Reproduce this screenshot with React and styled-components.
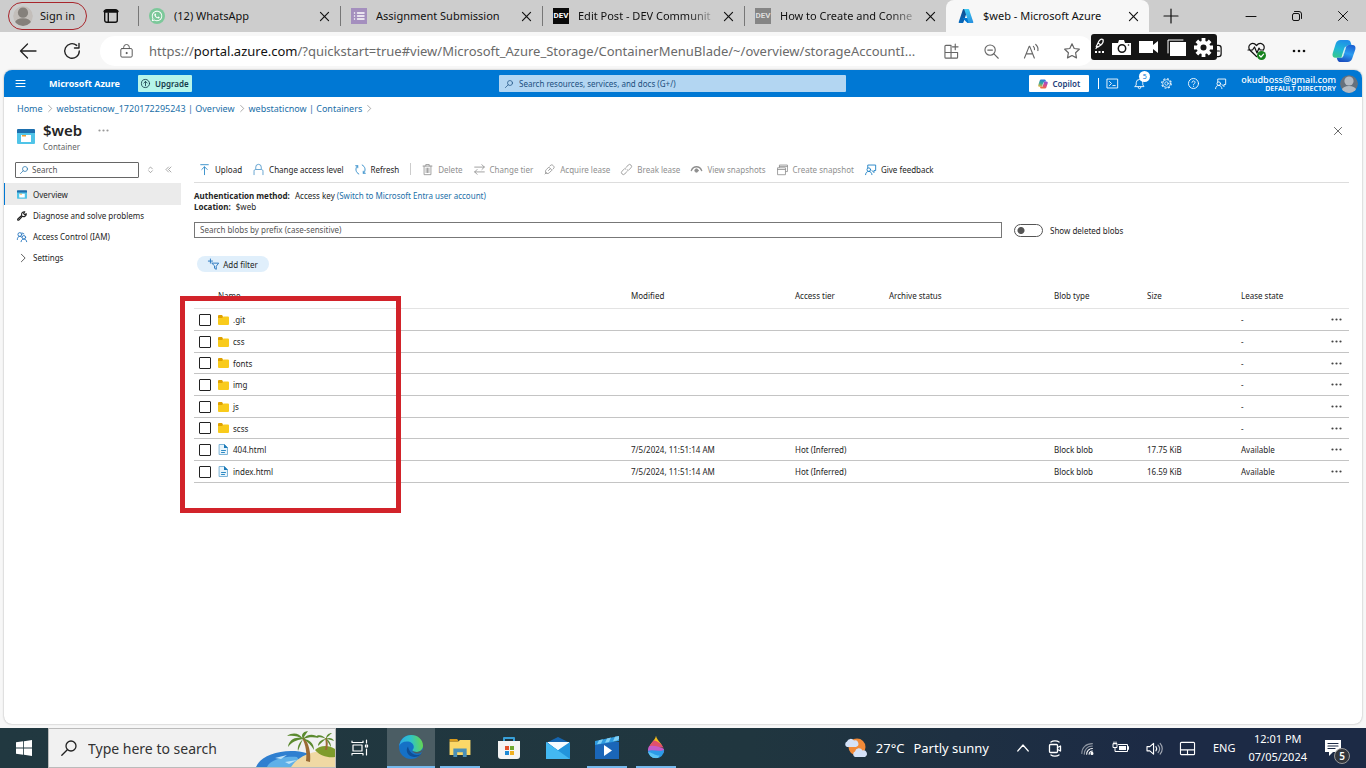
import React, { useState } from 'react';
import styled, { createGlobalStyle, css } from 'styled-components';
import { FaWhatsapp } from 'react-icons/fa';

const GlobalStyle = createGlobalStyle`
    * { box-sizing: border-box; }
    html, body { margin: 0; padding: 0; }
    body {
        background: #f7f7f7;
        color: #242424;
        font-family: "Noto Sans", "Open Sans", sans-serif;
        font-size: 8px;
        line-height: 11px;
    }
    button, input {
        font: inherit;
        color: inherit;
        margin: 0;
    }
    button {
        background: none;
        border: 0;
        padding: 0;
    }
    a { text-decoration: none; color: inherit; }
`

const Desktop = styled.div`
    display: flex;
    flex-direction: column;
    min-height: 100vh;
    position: relative;
`

/* drawn icons */

const Svg = styled.svg`
    display: block;
    flex: none;
    fill: none;
    stroke: ${p => p.$color || 'currentColor'};
    stroke-width: ${p => p.$weight || 1};
    stroke-linecap: round;
    stroke-linejoin: round;
    overflow: visible;
`
const Icon = ({ size = 16, w, h, box = 16, color, weight, children }) => (
    <Svg width={w || size} height={h || size} viewBox={`0 0 ${box} ${box}`} $color={color} $weight={weight} aria-hidden="true">
        {children}
    </Svg>
);

const CloseIcon = ({ size = 10, weight = 1 }) => <Icon size={size} box={10} weight={weight}><path d="M.5 .5l9 9M9.5 .5l-9 9" /></Icon>;
const PersonIcon = ({ size, back = '#c3beba', front = '#85807b' }) => (
    <Icon size={size} box={18}>
        <clipPath id={`head${size}`}><circle cx="9" cy="9" r="9" /></clipPath>
        <g stroke="none" clipPath={`url(#head${size})`}>
            <circle cx="9" cy="9" r="9" fill={back} />
            <circle cx="9" cy="6" r="4.6" fill={front} />
            <ellipse cx="9" cy="15" rx="7.2" ry="4" fill={front} />
        </g>
    </Icon>
);
const AzureLogo = () => (
    <Icon size={16} box={96}>
        <defs>
            <linearGradient id="azA" x1="0.7" y1="0" x2="0.3" y2="1"><stop offset="0" stopColor="#114a8b" /><stop offset="1" stopColor="#0669bc" /></linearGradient>
            <linearGradient id="azB" x1="0.3" y1="0" x2="0.7" y2="1"><stop offset="0" stopColor="#3ccbf4" /><stop offset="1" stopColor="#2892df" /></linearGradient>
        </defs>
        <g stroke="none">
            <path fill="url(#azA)" d="M33.338 6.544h26.038l-27.03 80.087a4.152 4.152 0 0 1-3.933 2.824H8.149a4.145 4.145 0 0 1-3.928-5.47L29.404 9.368a4.152 4.152 0 0 1 3.934-2.825z" />
            <path fill="#0078d4" d="M71.175 60.261h-41.29a1.911 1.911 0 0 0-1.305 3.309l26.532 24.764a4.171 4.171 0 0 0 2.846 1.121h23.38z" />
            <path fill="url(#azB)" d="M66.595 9.364a4.145 4.145 0 0 0-3.928-2.82H33.648a4.146 4.146 0 0 1 3.928 2.82l25.184 74.62a4.146 4.146 0 0 1-3.928 5.472h29.02a4.146 4.146 0 0 0 3.927-5.472z" />
        </g>
    </Icon>
);
const CopilotLogo = ({ size, bright, id }) => (
    <Icon size={size} box={24}>
        <defs>
            <linearGradient id={`${id}a`} x1="0.5" y1="0" x2="0.2" y2="1">
                {bright
                    ? <><stop offset="0" stopColor="#1f8fe8" /><stop offset="0.5" stopColor="#1fb6d8" /><stop offset="1" stopColor="#37c98b" /></>
                    : <><stop offset="0" stopColor="#2c7be0" /><stop offset="0.5" stopColor="#35a99a" /><stop offset="1" stopColor="#e8b43a" /></>}
            </linearGradient>
            <linearGradient id={`${id}b`} x1="0.7" y1="0" x2="0.4" y2="1">
                {bright
                    ? <><stop offset="0" stopColor="#1c62d4" /><stop offset="0.5" stopColor="#2b9df0" /><stop offset="1" stopColor="#1a4fc0" /></>
                    : <><stop offset="0" stopColor="#8a50d8" /><stop offset="0.5" stopColor="#d84c8c" /><stop offset="1" stopColor="#f0703a" /></>}
            </linearGradient>
        </defs>
        <g stroke="none">
            <path fill={`url(#${id}a)`} d="M8.500 1h7c1.600 0 2.600 .8 3.100 2.300l.9 2.700h-2.600c-1.500 0-2.300 .8-2.800 2.300l-2.500 8.200c-.5 1.500-1.300 2.300-2.900 2.300H3.600C1 18.800 0 16.800 .7 14.200L3.800 4.500C4.600 2.200 6.200 1 8.500 1z" />
            <path fill={`url(#${id}b)`} d="M15.500 23h-7c-1.600 0-2.600-.8-3.100-2.300l-.7-1.900h3.900c1.600 0 2.400-.8 2.900-2.300l2.500-8.200C14.500 6.800 15.300 6 16.800 6h3.600c2.600 0 3.600 2 2.900 4.400l-3.100 9.100C19.400 21.800 17.800 23 15.500 23z" />
            <path fill="#fff" fillOpacity=".8" d="M14.200 7.500l-3 9.500c-.3 .9-.8 1.500-1.800 1.800l.8-3.200 2-6c.3-1.200 .8-1.800 2-2.100z" />
        </g>
    </Icon>
);
const ContainerIcon = ({ w, h }) => (
    <Svg width={w} height={h} viewBox="0 0 18 15" aria-hidden="true">
        <g stroke="none">
            <path fill="#50c4e8" d="M0 3h18v11a1 1 0 0 1-1 1H1a1 1 0 0 1-1-1z" />
            <path fill="#1c6fae" d="M1 0h16a1 1 0 0 1 1 1v3H0V1a1 1 0 0 1 1-1z" />
            <path fill="#fff" d="M4 6h10v7H4z" />
            <path fill="#f0a030" d="M5 6h4v1.500H5z" />
        </g>
    </Svg>
);
const SearchIcon = ({ size = 9, color, weight = 1.4 }) => (
    <Icon size={size} color={color} weight={weight}><circle cx="10" cy="6" r="5" /><path d="M6.300 9.700L.8 15.200" /></Icon>
);
const ChevronRight = () => <Icon w={8} h={7} color="#888" weight={1.600}><path d="M5 1l7 7-7 7" /></Icon>;
const FeedbackIcon = ({ color }) => (
    <Icon size={11} color={color} weight={1.300}>
        <path d="M4 6V1.500h11.500v8H13v3l-2.800-3" /><circle cx="5.500" cy="8.200" r="2.600" /><path d="M.8 15.500c.3-3 2-4.700 4.700-4.700s4.200 1.700 4.600 4.700" />
    </Icon>
);
const Dots = () => <Svg width="11" height="3" viewBox="0 0 11 3"><g fill="currentColor" stroke="none"><circle cx="1.500" cy="1.500" r="1.100" /><circle cx="5.500" cy="1.500" r="1.100" /><circle cx="9.500" cy="1.500" r="1.100" /></g></Svg>;

/* browser tabs */

const TabStrip = styled.header`
    display: flex;
    align-items: center;
    height: 32px;
    background: #cdcdcd;
    color: #111;
    font-size: 11px;
    line-height: 16px;
    padding-left: 8px;
`
const SignIn = styled.button`
    display: flex;
    align-items: center;
    gap: 7px;
    width: 79px;
    height: 28px;
    padding-left: 4px;
    border: 1px solid #a8262c;
    border-radius: 14px;
    white-space: nowrap;
`
const WorkspaceButton = styled.button`
    margin: 0 20px 0 17px;
`
const Tab = styled.div`
    display: flex;
    align-items: center;
    flex: 0 1 202px;
    min-width: 0;
    height: ${p => p.$active ? '32px' : '20px'};
    padding: 0 11px 0 10px;
    gap: 9px;
    border-left: ${p => p.$active ? '0' : '1px solid #777'};
    ${p => p.$active && css`
        background: #f7f7f7;
        border-radius: 8px 8px 0 0;
        padding-left: 12px;
        flex-basis: 203px;
    `}
`
const TabTitle = styled.span`
    flex: 1;
    min-width: 0;
    overflow: hidden;
    white-space: nowrap;
    ${p => p.$fade && css`
        mask-image: linear-gradient(to right, #000 80%, rgba(0, 0, 0, .15));
    `}
`
const Favicon = styled.span`
    display: flex;
    align-items: center;
    justify-content: center;
    flex: none;
    width: 16px;
    height: 16px;
    background: ${p => p.$bg || 'none'};
    border-radius: ${p => p.$round ? '8px' : '0'};
    color: ${p => p.$color || '#fff'};
    font: bold 8px/16px "Roboto", sans-serif;
`
const CaptionButtons = styled.div`
    display: flex;
    align-items: center;
    margin-left: auto;
    padding-right: 18px;
    gap: 36px;
`
const NewTab = styled.button`
    margin-left: 15px;
`

const tabs = [
    { title: '(12) WhatsApp', icon: <Favicon $bg="#7cc89a" $round><FaWhatsapp size={12} /></Favicon> },
    {
        title: 'Assignment Submission',
        icon: <Favicon $bg="#a48fbe"><Icon size={12} box={12} weight={1.500}><path d="M1.500 3h.01M1.500 6h.01M1.500 9h.01M4.500 3H11M4.500 6H11M4.500 9H11" /></Icon></Favicon>,
    },
    { title: 'Edit Post - DEV Communit', fade: true, icon: <Favicon $bg="#0a0a0a">DEV</Favicon> },
    { title: 'How to Create and Conne', fade: true, icon: <Favicon $bg="#858585" $color="#ddd">DEV</Favicon> },
    { title: '$web - Microsoft Azure', active: true, icon: <AzureLogo /> },
];

const BrowserTabs = () => (
    <TabStrip>
        <SignIn><PersonIcon size={20} />Sign in</SignIn>
        <WorkspaceButton aria-label="Tab actions">
            <Icon size={14} box={14} weight={1.400}><rect x=".7" y=".7" width="12.600" height="12.600" rx="2" /><path d="M1 2.200h12" strokeWidth="3" /><path d="M4.300 4v9" /></Icon>
        </WorkspaceButton>
        {tabs.map(t => (
            <Tab key={t.title} $active={t.active}>
                {t.icon}
                <TabTitle $fade={t.fade}>{t.title}</TabTitle>
                <button aria-label="Close tab"><CloseIcon size={9} weight={1.300} /></button>
            </Tab>
        ))}
        <NewTab aria-label="New tab"><Icon size={14} box={14} weight={1.200}><path d="M7 0v14M0 7h14" /></Icon></NewTab>
        <CaptionButtons>
            <button aria-label="Minimize"><Icon size={10} box={10}><path d="M0 5.500h10" /></Icon></button>
            <button aria-label="Restore"><Icon size={10} box={10}><rect x=".5" y="2.500" width="7" height="7" rx="1.500" /><path d="M2.500 .5H7a2.500 2.500 0 0 1 2.500 2.500v4.500" /></Icon></button>
            <button aria-label="Close"><CloseIcon size={10} /></button>
        </CaptionButtons>
    </TabStrip>
);

/* address bar */

const Toolbar = styled.div`
    display: flex;
    align-items: center;
    height: 38px;
    padding: 0 10px 0 20px;
    gap: 28px;
`
const AddressBox = styled.div`
    display: flex;
    align-items: center;
    flex: 1;
    min-width: 0;
    height: 30px;
    margin-left: -8px;
    padding: 0 14px 0 20px;
    border-radius: 15px;
    background: #fff;
    color: #6a6a6a;
    font-size: 13px;
    line-height: 20px;
`
const Url = styled.span`
    flex: 1;
    min-width: 0;
    margin: 0 16px;
    overflow: hidden;
    white-space: nowrap;
    text-overflow: ellipsis;
    b {
        color: #111;
        font-weight: 400;
    }
`
const AddressIcons = styled.span`
    display: flex;
    align-items: center;
    gap: 25px;
    color: #666;
`
const ToolbarIcons = styled.div`
    display: flex;
    align-items: center;
    gap: 26px;
    margin-left: 86px;
    color: #111;
`
const Recorder = styled.div`
    position: absolute;
    top: 34px;
    right: 149px;
    display: flex;
    align-items: center;
    gap: 8px;
    width: 126px;
    height: 26px;
    padding: 0 6px 0 4px;
    border-radius: 3px;
    background: #151515;
    color: #fff;
`

const AddressBar = () => (
    <Toolbar>
        <button aria-label="Back"><Icon size={16} weight={1.300}><path d="M16 8H.5M7.500 1L.5 8l7 7" /></Icon></button>
        <button aria-label="Refresh"><Icon size={16} weight={1.400}><path d="M15.300 8A7.300 7.300 0 1 1 12.700 2.400M15 .5v4.500h-4.500" /></Icon></button>
        <AddressBox>
            <Icon w={13} h={16} weight={1.200} color="#555"><rect x="1" y="5" width="14" height="10.500" rx="1.500" /><path d="M4.500 5V3.500a3.500 3.500 0 0 1 7 0V5" /><circle cx="8" cy="10.500" r=".7" fill="#555" /></Icon>
            <Url>https://<b>portal.azure.com</b>/?quickstart=true#view/Microsoft_Azure_Storage/ContainerMenuBlade/~/overview/storageAccountI...</Url>
            <AddressIcons>
                <Icon size={15} weight={1.200}><path d="M7 1.500H2a1 1 0 0 0-1 1V14a1 1 0 0 0 1 1h11.500a1 1 0 0 0 1-1V9H1M7.500 1.500V15M12 0v6M9 3h6" /></Icon>
                <Icon size={15} weight={1.200}><circle cx="6.500" cy="6.500" r="5.500" /><path d="M10.600 10.600l4.600 4.600M4 6.500h5" /></Icon>
                <Icon size={15} weight={1.200}><path d="M.5 15L5.500 2.500h.6L11 15M2.300 10.500h7M10 2.500c1 .9 1.400 2.200 1.200 3.500M12.500 .5c2 1.700 2.700 4.200 2.300 6.500" /></Icon>
                <Icon size={16} weight={1.200}><path d="M8 .8l2.200 4.700 5.100.7-3.700 3.600.9 5.100L8 12.500l-4.500 2.400.9-5.100L.7 6.200l5.100-.7z" /></Icon>
            </AddressIcons>
        </AddressBox>
        <ToolbarIcons>
            <Icon size={14} weight={1.400}><rect x="1" y="1.500" width="14" height="13" rx="3" /><path d="M8 1.500v13M10 8h3" /></Icon>
            <Icon size={18} box={18} weight={1.200}>
                <path d="M8.500 14.500L2 8.300C.2 6.300 .5 3.500 2.400 2.200 4.500 .9 6.800 1.500 8.500 3.500c1.700-2 4-2.600 6.100-1.300C16.500 3.500 16.800 6 15.200 8.200M0 8h4.500L6.500 5 9 11l2-5 1.200 2H15" />
                <circle cx="13.500" cy="13.500" r="4.500" fill="#16821d" stroke="none" /><path d="M11.500 13.500l1.500 1.500 2.600-2.800" stroke="#fff" />
            </Icon>
            <Icon size={14} box={14}><g fill="#111" stroke="none"><circle cx="2" cy="7" r="1.300" /><circle cx="7" cy="7" r="1.300" /><circle cx="12" cy="7" r="1.300" /></g></Icon>
            <CopilotLogo size={24} bright id="edgeCopilot" />
        </ToolbarIcons>
    </Toolbar>
);

const RecorderBar = () => (
    <Recorder>
        <Svg width="9" height="16" viewBox="0 0 9 16">
            <path stroke="#fff" strokeWidth="1.200" d="M2 6l2-4c1-1.500 3-2 4-1.500C8.500 2 8 4 6.500 5.500L3 8c-1.500 .8-2.500 0-1-2zM3 4l3 2M1 9.500l1.500-2" />
            <path stroke="none" fill="#fff" d="M0 12h2v2H0zM3.500 12h2v2h-2zM7 12h2v2H7z" />
        </Svg>
        <Svg width="19" height="15" viewBox="0 0 19 15"><path stroke="none" fill="#fff" d="M0 3h6l1-3h5l1 3h6v12H0z" /><circle cx="10" cy="8.500" r="3.700" stroke="#151515" strokeWidth="1.500" /><circle cx="16.500" cy="5" r=".8" fill="#151515" stroke="none" /></Svg>
        <Svg width="20" height="14" viewBox="0 0 20 14"><path stroke="none" fill="#fff" d="M0 1h14v4l5-4v12l-5-4v4H0z" /></Svg>
        <Svg width="19" height="17" viewBox="0 0 19 17"><path stroke="#fff" d="M1 14V1h15" /><path stroke="none" fill="#fff" d="M3 3h16v14H3z" /></Svg>
        <Svg width="19" height="19" viewBox="0 0 20 20">
            <circle cx="10" cy="10" r="5.200" stroke="#fff" strokeWidth="4" />
            <path stroke="#fff" strokeWidth="4" strokeLinecap="butt" d="M10 0v4M10 16v4M0 10h4M16 10h4M3 3l2.500 2.500M14.500 14.500L17 17M17 3l-2.500 2.500M5.500 14.500L3 17" />
        </Svg>
    </Recorder>
);

/* portal */

const Page = styled.div`
    display: flex;
    flex-direction: column;
    flex: 1;
    margin: 0 4px 4px;
    border-radius: 8px;
    overflow: hidden;
    background: #fff;
    box-shadow: 0 0 2px rgba(0, 0, 0, .35);
`
const PortalHeader = styled.header`
    display: grid;
    grid-template-columns: 495fr 347fr 516fr;
    align-items: center;
    height: 27px;
    background: #0078d4;
    color: #fff;
`
const HeaderGroup = styled.div`
    display: flex;
    align-items: center;
    justify-content: ${p => p.$end ? 'flex-end' : 'flex-start'};
    padding: ${p => p.$end ? '0 4px 0 0' : '0 0 0 12px'};
`
const Brand = styled.a`
    margin: 0 18px 0 24px;
    font-size: 9px;
    font-weight: 700;
`
const Upgrade = styled.button`
    display: flex;
    align-items: center;
    gap: 5px;
    width: 54px;
    height: 17px;
    padding: 0 3px;
    border-radius: 1px;
    background: #b6f5ea;
    color: #143a4a;
    font-weight: 600;
`
const GlobalSearch = styled.label`
    display: flex;
    align-items: center;
    gap: 6px;
    height: 17px;
    padding: 0 6px;
    border-radius: 1px;
    background: #b3d6f2;
    color: #1b4f80;
`
const BareInput = styled.input`
    flex: 1;
    min-width: 0;
    height: 11px;
    padding: 0;
    border: 0;
    outline: 0;
    background: none;
    &::placeholder {
        color: ${p => p.$hint || '#555'};
        opacity: 1;
    }
`
const CopilotButton = styled.button`
    display: flex;
    align-items: center;
    justify-content: center;
    gap: 4px;
    width: 60px;
    height: 17px;
    margin-right: 9px;
    border-radius: 1px;
    background: #fff;
    color: #23417a;
    font-weight: 600;
`
const HeaderIcons = styled.div`
    display: flex;
    align-items: center;
    gap: 16px;
    padding-left: 8px;
    border-left: 1px solid #fff;
    button { position: relative; }
`
const Badge = styled.span`
    position: absolute;
    top: -7px;
    right: -5px;
    width: 11px;
    height: 11px;
    border-radius: 8px;
    background: #fff;
    color: #0078d4;
    font-size: 7px;
    line-height: 11px;
    text-align: center;
`
const Account = styled.div`
    display: flex;
    flex-direction: column;
    margin: 0 4px 0 15px;
    text-align: right;
    font-size: 9px;
    line-height: 10px;
    font-weight: 500;
    small {
        font-size: 7px;
        line-height: 8px;
        font-weight: 600;
    }
`

const TopBar = () => (
    <PortalHeader>
        <HeaderGroup>
            <button aria-label="Show portal menu"><Icon size={9} box={9}><path d="M0 1.500h9M0 4.500h9M0 7.500h9" /></Icon></button>
            <Brand href="#home">Microsoft Azure</Brand>
            <Upgrade><Icon size={9} weight={1.500}><circle cx="8" cy="8" r="7.200" /><path d="M8 12V4.500M5 7.200l3-3 3 3" /></Icon>Upgrade</Upgrade>
        </HeaderGroup>
        <GlobalSearch>
            <SearchIcon color="#1b4f80" size={8} />
            <BareInput $hint="#1b4f80" placeholder="Search resources, services, and docs (G+/)" aria-label="Search resources" />
        </GlobalSearch>
        <HeaderGroup $end>
            <CopilotButton><CopilotLogo size={10} id="portalCopilot" />Copilot</CopilotButton>
            <HeaderIcons>
                <button aria-label="Cloud Shell"><Icon size={11} weight={1.300}><rect x=".5" y="1.500" width="15" height="13" /><path d="M3.500 5l3 3-3 3M8.500 11H12" /></Icon></button>
                <button aria-label="Notifications"><Icon size={11} weight={1.300}><path d="M1.500 12.500h13l-1.700-2.500V7A4.800 4.800 0 0 0 3.200 7v3zM6 13.500a2 2 0 0 0 4 0" /></Icon><Badge>5</Badge></button>
                <button aria-label="Settings">
                    <Icon size={11} weight={1.100}><circle cx="8" cy="8" r="2.500" /><circle cx="8" cy="8" r="5.600" /><circle cx="8" cy="8" r="7" strokeDasharray="2.750 2.750" strokeLinecap="butt" strokeWidth="1.500" /></Icon>
                </button>
                <button aria-label="Help"><Icon size={11} weight={1.300}><circle cx="8" cy="8" r="7.300" /><path d="M5.800 6.300a2.200 2.200 0 1 1 3.300 2c-.8 .5-1.100 .9-1.100 1.700M8 12.200v.1" /></Icon></button>
                <button aria-label="Feedback"><FeedbackIcon /></button>
            </HeaderIcons>
            <Account>okudboss@gmail.com<small>DEFAULT DIRECTORY</small></Account>
            <PersonIcon size={18} back="#66707c" front="#b4bac2" />
        </HeaderGroup>
    </PortalHeader>
);

const Breadcrumb = styled.nav`
    display: flex;
    align-items: center;
    gap: 3px;
    height: 23px;
    padding-left: 13px;
    color: #1b6fa8;
    font-size: 9px;
`
const TitleBar = styled.div`
    display: flex;
    align-items: flex-start;
    gap: 8px;
    height: 40px;
    padding: 0 20px 0 13px;
    h1 {
        margin: 0;
        font-size: 15px;
        line-height: 20px;
        font-weight: 600;
    }
    p {
        margin: 1px 0 0;
        color: #666;
    }
    > svg { margin-top: 9px; }
`
const TitleDots = styled.button`
    margin: 9px auto 0 8px;
    color: #999;
`
const BladeClose = styled.button`
    margin-top: 7px;
    color: #444;
`
const Columns = styled.div`
    display: flex;
    flex: 1;
`
const Sidebar = styled.aside`
    width: 177px;
    margin-right: 13px;
    flex: none;
`
const SideSearch = styled.div`
    display: flex;
    align-items: center;
    gap: 9px;
    height: 23px;
    padding: 0 8px 4px 11px;
    color: #777;
    label {
        display: flex;
        align-items: center;
        gap: 4px;
        width: 124px;
        height: 16px;
        padding: 0 4px;
        border: 1px solid #666;
        border-radius: 1px;
        color: #242424;
    }
    button:last-child { margin-left: 4px; }
`
const SideItem = styled.a`
    display: flex;
    align-items: center;
    gap: 6px;
    height: ${p => p.$active ? '22px' : '21px'};
    padding-left: ${p => p.$active ? '12px' : '13px'};
    border-left: ${p => p.$active ? '1px solid #0078d4' : '0'};
    background: ${p => p.$active ? '#ebebeb' : 'none'};
`

const Menu = () => (
    <Sidebar>
        <SideSearch>
            <label><SearchIcon color="#1b6fa8" size={8} /><BareInput placeholder="Search" aria-label="Search menu" /></label>
            <button aria-label="Expand all"><Icon size={5} box={8} color="#777"><path d="M1 3l3-3 3 3M1 6l3 3 3-3" /></Icon></button>
            <button aria-label="Collapse menu"><Icon size={5} box={8} color="#777"><path d="M4 0L0 4l4 4M8 0L4 4l4 4" /></Icon></button>
        </SideSearch>
        <nav>
            <SideItem href="#overview" $active><ContainerIcon w={10} h={9} />Overview</SideItem>
            <SideItem href="#diagnose">
                <Icon size={10} weight={1.800} color="#222"><path d="M15 4.500a4.500 4.500 0 0 1-6.500 4L3 14.500c-1.500 1-2.700-.5-1.700-1.700L7.500 7a4.500 4.500 0 0 1 5-5.800L10.500 4 12 5.800z" /></Icon>
                Diagnose and solve problems
            </SideItem>
            <SideItem href="#iam">
                <Icon size={10} weight={1.500} color="#2a78c0"><circle cx="4.500" cy="4" r="3" /><path d="M.5 12c0-3 1.500-5 4-5 1.300 0 2.300 .5 3 1.300" /><circle cx="11" cy="8.500" r="2.800" /><path d="M6.500 15.500c.3-2.500 2-4.200 4.500-4.200s4.200 1.700 4.500 4.200M8 1.500l3 1.500" /></Icon>
                Access Control (IAM)
            </SideItem>
            <SideItem href="#settings"><Icon size={10} weight={1.500} color="#555"><path d="M7 2l6 6-6 6" /></Icon>Settings</SideItem>
        </nav>
    </Sidebar>
);

const Content = styled.main`
    flex: 1;
    min-width: 0;
    padding-right: 13px;
`
const CommandBar = styled.div`
    display: flex;
    align-items: center;
    gap: 11px;
    height: 23px;
    padding: 0 0 4px 5px;
    border-bottom: 1px solid #ddd;
`
const Command = styled.button`
    display: flex;
    align-items: center;
    gap: 5px;
    white-space: nowrap;
    &:disabled { color: #8f8f8f; }
`
const Divider = styled.span`
    width: 1px;
    height: 12px;
    background: #ccc;
`
const Info = styled.p`
    margin: 7px 0 10px;
    a { color: #1b6fa8; }
    b { margin-right: 3px; }
`
const FilterRow = styled.div`
    display: flex;
    align-items: center;
    gap: 12px;
`
const PrefixInput = styled.input`
    flex: 1;
    min-width: 0;
    max-width: 808px;
    height: 16px;
    padding: 0 5px 2px;
    border: 1px solid #777;
    background: #fff;
    &::placeholder {
        color: #555;
        opacity: 1;
    }
`
const ToggleLabel = styled.label`
    display: flex;
    align-items: center;
    gap: 7px;
    white-space: nowrap;
`
const Toggle = styled.input`
    appearance: none;
    width: 29px;
    height: 13px;
    border: 1px solid #555;
    border-radius: 7px;
    background: radial-gradient(circle at 6px 50%, #555 3px, transparent 4px);
    &:checked { background: radial-gradient(circle at 21px 50%, #0078d4 3px, transparent 4px); }
`
const AddFilter = styled.button`
    display: flex;
    align-items: center;
    justify-content: center;
    gap: 4px;
    width: 72px;
    height: 16px;
    margin: 18px 0 14px 3px;
    border-radius: 8px;
    background: #e0effb;
`
const TableArea = styled.div`
    position: relative;
`
const Highlight = styled.div`
    position: absolute;
    top: 10px;
    left: -14px;
    width: 221px;
    height: 217px;
    border: 5px solid #d2232a;
    pointer-events: none;
`
const BlobTable = styled.table`
    width: 100%;
    table-layout: fixed;
    border-collapse: separate;
    border-spacing: 0;
    th, td {
        height: 22px;
        padding: 0;
        text-align: left;
        font-weight: 400;
        border-bottom: 1px solid #c4c4c4;
    }
    th {
        height: 23px;
        padding-bottom: 4px;
        border-bottom-color: #e3e3e3;
    }
    tbody tr:nth-child(3n) td { height: 21px; }
`
const Col = styled.col`
    width: ${p => p.$w ? `${p.$w}px` : 'auto'};
`
const CheckCell = styled.td`
    && { padding-left: 5px; }
`
const CheckBox = styled.input`
    appearance: none;
    display: block;
    width: 12px;
    height: 12px;
    border: 1px solid #222;
    border-radius: 1px;
    background: #fff;
    &:checked { background: #0078d4; }
`
const BlobName = styled.a`
    display: flex;
    align-items: center;
    gap: 4px;
`
const RowMenu = styled.button`
    display: block;
    color: #444;
`

const FolderIcon = () => (
    <Svg width="11" height="10" viewBox="0 0 11 10"><g stroke="none"><path fill="#dfa100" d="M0 1a1 1 0 0 1 1-1h3l1 1.500V4H0z" /><path fill="#f9cb1c" d="M0 3h4l1.500-1.500H10a1 1 0 0 1 1 1V9a1 1 0 0 1-1 1H1a1 1 0 0 1-1-1z" /></g></Svg>
);
const FileIcon = () => (
    <Svg width="11" height="11" viewBox="0 0 11 11"><path stroke="#7db4d8" fill="#e8f4fb" d="M1.500 .5h5l3 3v7h-8z" /><path stroke="none" fill="#1c7ab8" d="M6 0l4 4H6z" /><path stroke="#2d8ac4" d="M3.500 6.500h4M3.500 8.500h3" /></Svg>
);

const commands = [
    { name: 'Upload', icon: <path d="M2.500 1h11M8 15.500V4.500M4 8l4-4 4 4" />, color: '#1b7fc4' },
    { name: 'Change access level', icon: <path d="M1.500 15.500v-5c0-1.500 .8-2.500 2.500-2.500V4.500a4 4 0 0 1 8 0V8c1.700 0 2.500 1 2.500 2.500v5M5 8h6" />, color: '#4a94c8' },
    { name: 'Refresh', icon: <path d="M5.500 14.500A7 7 0 0 1 3.500 2.700M1 2.500h3v3M10.500 1.500a7 7 0 0 1 2 11.800M15 13.500h-3v-3" />, color: '#1b7fc4' },
    { divider: true },
    { name: 'Delete', icon: <path d="M1.500 3h13M5.500 3V.8h5V3M3 3v12.500h10V3M6 6v6.500M8 6v6.500M10 6v6.500" /> },
    { name: 'Change tier', icon: <path d="M1 4.500h14M11.500 1L15 4.500 11.500 8M15 11.500H1M4.500 8L1 11.500 4.500 15" /> },
    { name: 'Acquire lease', icon: <path d="M1.500 14.500l1.500-1.500M3 13c-1.500-2-1-3.500 .5-5L7 4.500 11.500 9 8 12.500c-1.500 1.500-3 2-5 .5zM8.500 3L10 1.700c2-1.700 6 2.300 4.300 4.300L13 7.500M6.500 9.500L9 7" /> },
    { name: 'Break lease', icon: <path d="M7 7.500l-1.500-1-4 4a2.800 2.800 0 0 0 4 4l3-3.500M9 8.500l1.500 1 4-4a2.800 2.800 0 0 0-4-4l-3 3.500" /> },
    { name: 'View snapshots', icon: <><path d="M.5 9.500C2 6 4.500 4 8 4s6 2 7.500 5.500" strokeWidth="2" /><circle cx="8" cy="9.500" r="2.500" fill="#8f8f8f" /></> },
    { name: 'Create snapshot', icon: <path d="M.8 15V5.500h11.500V15zM.8 8h11.500M3.500 5V1.500h11.700v9.500h-2.500M3.500 3.500h11.700" /> },
];

const files = [
    { name: '.git' }, { name: 'css' }, { name: 'fonts' }, { name: 'img' }, { name: 'js' }, { name: 'scss' },
    { name: '404.html', size: '17.75 KiB' },
    { name: 'index.html', size: '16.59 KiB' },
];

const FileRow = ({ file }) => (
    <tr>
        <CheckCell><CheckBox type="checkbox" aria-label={`Select ${file.name}`} /></CheckCell>
        <td><BlobName href={`#${file.name}`}>{file.size ? <FileIcon /> : <FolderIcon />}{file.name}</BlobName></td>
        <td>{file.size && '7/5/2024, 11:51:14 AM'}</td>
        <td>{file.size && 'Hot (Inferred)'}</td>
        <td></td>
        <td>{file.size && 'Block blob'}</td>
        <td>{file.size}</td>
        <td>{file.size ? 'Available' : '-'}</td>
        <td><RowMenu aria-label={`More actions for ${file.name}`}><Dots /></RowMenu></td>
    </tr>
);

const Overview = () => {
    const [deleted, setDeleted] = useState(false);
    return (
        <Content>
            <CommandBar>
                {commands.map((c, i) => c.divider
                    ? <Divider key={i} />
                    : <Command key={c.name} disabled={!c.color}><Icon size={11} weight={1.200} color={c.color || '#8f8f8f'}>{c.icon}</Icon>{c.name}</Command>
                )}
                <Command><FeedbackIcon color="#1b7fc4" />Give feedback</Command>
            </CommandBar>
            <Info>
                <b>Authentication method:</b> Access key <a href="#switch">(Switch to Microsoft Entra user account)</a><br />
                <b>Location:</b> $web
            </Info>
            <FilterRow>
                <PrefixInput placeholder="Search blobs by prefix (case-sensitive)" aria-label="Search blobs by prefix" />
                <ToggleLabel>
                    <Toggle type="checkbox" checked={deleted} onChange={() => setDeleted(!deleted)} />
                    Show deleted blobs
                </ToggleLabel>
            </FilterRow>
            <AddFilter><Icon size={11} weight={1.400} color="#2a78c0"><path d="M6 6h9.500L12 10.500V15l-2.500-1.500v-3zM3.500 0v6M.5 3h6" /></Icon>Add filter</AddFilter>
            <TableArea>
                <BlobTable>
                    <colgroup>
                        <Col $w={24} /><Col /><Col $w={164} /><Col $w={94} /><Col $w={165} /><Col $w={93} /><Col $w={94} /><Col $w={90} /><Col $w={18} />
                    </colgroup>
                    <thead>
                        <tr><th></th><th>Name</th><th>Modified</th><th>Access tier</th><th>Archive status</th><th>Blob type</th><th>Size</th><th>Lease state</th><th></th></tr>
                    </thead>
                    <tbody>
                        {files.map(f => <FileRow key={f.name} file={f} />)}
                    </tbody>
                </BlobTable>
                <Highlight />
            </TableArea>
        </Content>
    );
};

/* taskbar */

const TaskbarWrap = styled.footer`
    display: flex;
    align-items: center;
    height: 40px;
    background: linear-gradient(to right, #213840 0, #20363f 55%, #1c2a45 85%);
    color: #fff;
    font-size: 13px;
    line-height: 18px;
`
const TaskButton = styled.button`
    display: flex;
    align-items: center;
    justify-content: center;
    width: ${p => p.$wide ? '48px' : '40px'};
    height: 40px;
    border-bottom: ${p => p.$open ? '2px solid #76b9ed' : '0'};
    background: ${p => p.$active ? '#4b5d64' : 'none'};
`
const TaskSearch = styled.label`
    display: flex;
    align-items: center;
    gap: 11px;
    width: 288px;
    height: 40px;
    padding-left: 12px;
    border: 1px solid #bbb;
    background: #f1f1f1;
    color: #222;
    input {
        height: 20px;
        font-size: 14px;
    }
`
const Apps = styled.div`
    display: flex;
    gap: 9px;
    margin-left: 3px;
    > :first-child { margin-right: -4px; }
`
const Weather = styled.button`
    display: flex;
    align-items: center;
    gap: 9px;
    margin-left: auto;
    white-space: nowrap;
`
const Tray = styled.div`
    display: flex;
    align-items: center;
    gap: 18px;
    margin-left: 28px;
    font-size: 11px;
    line-height: 18px;
`
const Clock = styled.time`
    display: block;
    margin-left: -5px;
    text-align: center;
`
const ActionCenter = styled.button`
    position: relative;
    margin-right: 25px;
`
const TrayBadge = styled(Badge)`
    top: 8px;
    right: -9px;
    width: 16px;
    height: 16px;
    border: 1px solid #999;
    background: #33363c;
    color: #fff;
    font-size: 10px;
    font-weight: 600;
    line-height: 14px;
`

const Beach = () => (
    <Svg width="80" height="36" viewBox="0 0 80 36">
        <clipPath id="beachClip"><path d="M0 -2h80v39H0z" /></clipPath>
        <g stroke="none" clipPath="url(#beachClip)">
            <path fill="#2f7fd0" d="M1 37C5 27 20 21 36 21c12 0 24 2 30 16z" />
            <path fill="#5fb0e8" d="M12 37c3-7 16-11 30-10l6 10z" />
            <path fill="#bfe3f7" d="M20 28l12-3-6 4zM30 32l12-2-8 4z" />
            <path fill="#f0d9a4" d="M36 37c5-8 14-13 24-15 8-1 14 1 20 3v12z" />
            <path fill="#7f9c2c" d="M60 20c5-5 14-5 20-1v8c-7 1-15-1-20-7z" />
            <path fill="#9b6b35" d="M47 8c4 7 5 16 4 23l4 1c1-9-1-18-6-25zM70 8c1 4 1 7 0 12h2c1-5 1-8 0-12z" />
            <g fill="#5b8a2e">
                <path d="M48 9C44 3 38 2 32 6c6-1 11 0 16 3zM48 9C42 6 34 9 33 17c4-5 8-7 15-8zM48 9C46 5 47 2 53 1c-2 3-3 4-5 8zM48 9c4-5 11-6 16-1-6-1-10-1-16 1zM48 9c6 0 11 4 11 11-3-5-6-8-11-11zM48 9c-3 3-6 7-5 12 2-5 3-8 5-12z" />
                <path d="M71 9c-3-4-8-5-11-2 4 0 7 0 11 2zM71 9c-4 0-8 3-8 7 3-3 5-5 8-7zM71 9c0-4 3-6 6-6-2 2-4 3-6 6zM71 9c3-2 7-1 8 2-3-1-5-2-8-2zM71 9c3 1 5 4 5 8-2-3-3-5-5-8z" />
            </g>
        </g>
    </Svg>
);

const apps = [
    {
        name: 'Edge', wide: true, active: true, open: true, icon: (
            <Icon size={24} box={24}>
                <defs><linearGradient id="edgeTop" x1="0" y1="0.5" x2="1" y2="0.4"><stop offset="0" stopColor="#2ea8e8" /><stop offset="0.5" stopColor="#2fc3c8" /><stop offset="1" stopColor="#67d74c" /></linearGradient></defs>
                <g stroke="none">
                    <circle cx="12" cy="12" r="12" fill="#1571c6" />
                    <path fill="url(#edgeTop)" d="M.2 11C1.200 4.500 6 0 12.300 0 19 0 24 5 24 10.500c0 4-3 6.500-6.500 6.500-2.500 0-4-.8-4-1.700 0-.8 1.300-1.300 1.300-3.300C14.800 8.500 11.500 6.500 8 6.500 4 6.500 1.200 8.500 .2 11z" />
                    <path fill="#0f4f96" d="M9 11.500C6 15 8.500 21.500 15 22c3 .2 5.500-1 7.200-3C19 20.500 15 20.300 12.500 18 10.500 16.200 9.500 14 9 11.500z" />
                    <path fill="#4b5d64" d="M23.500 16.200c-1.500 1.800-4 2.700-6.500 2.300-2-.3-3.500-1.500-3.700-2.900 .5 .9 2 1.400 4.200 1.400 2.500 0 4.500-1 5.600-2.500z" />
                </g>
            </Icon>
        ),
    },
    { name: 'File Explorer', open: true, icon: <Svg width="22" height="19" viewBox="0 0 22 20"><g stroke="none"><path fill="#d99b1c" d="M0 1h8l2 3H0z" /><path fill="#fbd868" d="M0 4h9l2-2h11v16H0z" /><path fill="#4a90b8" d="M4 20v-9h14v9h-4v-5H8v5z" /></g></Svg> },
    { name: 'Store', icon: <Svg width="24" height="24" viewBox="0 0 24 24"><path stroke="#38a0d8" strokeWidth="2" d="M7 6V2h10v4" /><g stroke="none"><path fill="#f4f4f4" d="M1 5h22v15a3 3 0 0 1-3 3H4a3 3 0 0 1-3-3z" /><path fill="#e2512c" d="M8 10h4v4H8z" /><path fill="#6fa830" d="M13 10h4v4h-4z" /><path fill="#1d8ad6" d="M8 15h4v4H8z" /><path fill="#f0b020" d="M13 15h4v4h-4z" /></g></Svg> },
    { name: 'Mail', icon: <Svg width="24" height="22" viewBox="0 0 24 22"><g stroke="none"><path fill="#1565b0" d="M0 6l12-6 12 6v4H0z" /><path fill="#f6fbff" d="M1 5h22v4l-10 6z" /><path fill="#2294dc" d="M0 5l12 8 12-8v17H0z" /><path fill="#43b8f2" d="M0 5l24 17H0z" /><path fill="#f6fbff" d="M2 5h20l-10 8z" /></g></Svg> },
    { name: 'Movies & TV', open: true, icon: <Svg width="24" height="23" viewBox="0 0 24 23"><g stroke="none"><path fill="#1a66b8" d="M0 6h24v17H0z" /><path fill="#2e9be0" d="M0 5l24-5v5L0 9z" /><path fill="#7fd0f5" d="M4 4.200l4-.9-2 4.200-4 .8zM12 2.500l4-.9-2 4.300-4 .8zM20 .8l4-.8v3l-2 1.500-4 .7z" /><path fill="#fff" d="M9 9l8 5.500L9 20z" /></g></Svg> },
    {
        name: 'Paint 3D', open: true, icon: (
            <Svg width="18" height="24" viewBox="0 0 20 25">
                <clipPath id="drop"><path d="M10 0c1 6 9 10 9 16a9 9 0 0 1-18 0C1 10 9 6 10 0z" /></clipPath>
                <g stroke="none" clipPath="url(#drop)"><path fill="#f4bc1c" d="M0 0h20v10H0z" /><path fill="#e0506c" d="M0 9l6-4c4 0 9 3 14 8H0z" /><path fill="#c45cc8" d="M0 12c7-2 13 0 20 3v4H0z" /><path fill="#2c9be8" d="M0 17c7-3 14 2 20-2v10H0z" /><path fill="#5cc4f4" d="M0 18c6 0 8 4 14 4l-2 3H0z" /></g>
            </Svg>
        ),
    },
];

const Taskbar = () => (
    <TaskbarWrap>
        <TaskButton $wide aria-label="Start"><Svg width="16" height="16" viewBox="0 0 16 16"><path stroke="none" fill="#fff" d="M0 2.300L7.200 1.300v6.300H0zM8 1.200L16 0v7.600H8zM0 8.400h7.200v6.300L0 13.700zM8 8.400h8V16l-8-1.200z" /></Svg></TaskButton>
        <TaskSearch>
            <SearchIcon size={16} weight={1.300} />
            <BareInput $hint="#333" placeholder="Type here to search" aria-label="Search Windows" />
            <Beach />
        </TaskSearch>
        <TaskButton $wide aria-label="Task View"><Icon size={16} weight={1.200}><path d="M0 1v1.500h11V1M0 15v-1.500h11V15M1 5h9v6H1zM14.500 0v3M14.500 9v6M13.500 5h2v2h-2z" /></Icon></TaskButton>
        <Apps>
            {apps.map(a => <TaskButton key={a.name} $wide={a.wide} $active={a.active} $open={a.open} aria-label={a.name}>{a.icon}</TaskButton>)}
        </Apps>
        <Weather>
            <Svg width="22" height="20" viewBox="0 0 22 20"><g stroke="none"><circle cx="12" cy="9" r="8.500" fill="#f28a38" /><path fill="#d5e2f8" d="M2 9a3 3 0 0 1 0-5.500A4 4 0 0 1 9 2.500 3 3 0 0 1 11 9zM10 19a3 3 0 0 1 0-5.500 4 4 0 0 1 7.500-1A3.500 3.500 0 0 1 20 19z" /></g></Svg>
            <span>27°C</span>
            <span>Partly sunny</span>
        </Weather>
        <Tray>
            <Icon size={12} weight={1.600}><path d="M1 12l7-8 7 8" /></Icon>
            <Icon size={16}><rect x="2.500" y="4.500" width="8" height="8" rx="1" strokeWidth="1.300" /><path d="M10.500 7.500l3-1.500v5l-3-1.500M4 2c2-1.500 6-1.500 8 0M4 15c2 1.500 6 1.500 8 0" strokeWidth="1.300" /></Icon>
            <Icon size={13} weight={1.300}><path stroke="#fff" strokeOpacity=".5" d="M1 14C1 7 6 2 14 2M4 15c0-6 4-10 10-10" /><path d="M7 15c0-4 3-7 7-7M10 15c0-2 2-4 4-4" /><circle cx="13.500" cy="14" r="1.200" fill="#fff" /></Icon>
            <Svg width="17" height="14" viewBox="0 0 17 14"><path stroke="#fff" d="M6.500 3.500h9v7H5M15.500 5.500h1v3h-1M1 3v3.500h4V3zM2 3V1M4 3V1M3 7v3.500h3" /><path stroke="none" fill="#fff" d="M7 5h7v4H7z" /></Svg>
            <Icon size={15} weight={1.200}><path d="M0 6v4.500h3L7 14V2.500L3 6zM9.500 6c1 1.300 1 3 0 4.500" /><path stroke="#fff" strokeOpacity=".6" d="M11.800 4.300c2 2.300 2 5.600 0 8M14 2.500c3 3.300 3 8.200 0 11.500" /></Icon>
            <Icon size={15} weight={1.200}><rect x=".5" y="1.500" width="15" height="13" rx="1" /><path d="M.5 9.500h15M8 9.500v5" /></Icon>
            <span>ENG</span>
            <Clock>12:01 PM<br />07/05/2024</Clock>
            <ActionCenter aria-label="Notifications">
                <Svg width="16" height="16" viewBox="0 0 16 16"><path stroke="none" fill="#fff" d="M0 0h16v12H8l-4 4v-4H0z" /><path stroke="#1c2a45" strokeWidth="1.200" d="M3 3.500h10M3 6h10M3 8.500h7" /></Svg>
                <TrayBadge>5</TrayBadge>
            </ActionCenter>
        </Tray>
    </TaskbarWrap>
);

const App = () => (
    <Desktop>
        <GlobalStyle />
        <BrowserTabs />
        <AddressBar />
        <RecorderBar />
        <Page>
            <TopBar />
            <Breadcrumb>
                <a href="#home">Home</a><ChevronRight />
                <a href="#account">webstaticnow_1720172295243 | Overview</a><ChevronRight />
                <a href="#containers">webstaticnow | Containers</a><ChevronRight />
            </Breadcrumb>
            <TitleBar>
                <ContainerIcon w={18} h={15} />
                <div>
                    <h1>$web</h1>
                    <p>Container</p>
                </div>
                <TitleDots aria-label="More"><Dots /></TitleDots>
                <BladeClose aria-label="Close blade"><CloseIcon size={8} /></BladeClose>
            </TitleBar>
            <Columns>
                <Menu />
                <Overview />
            </Columns>
        </Page>
        <Taskbar />
    </Desktop>
);

export default App;
